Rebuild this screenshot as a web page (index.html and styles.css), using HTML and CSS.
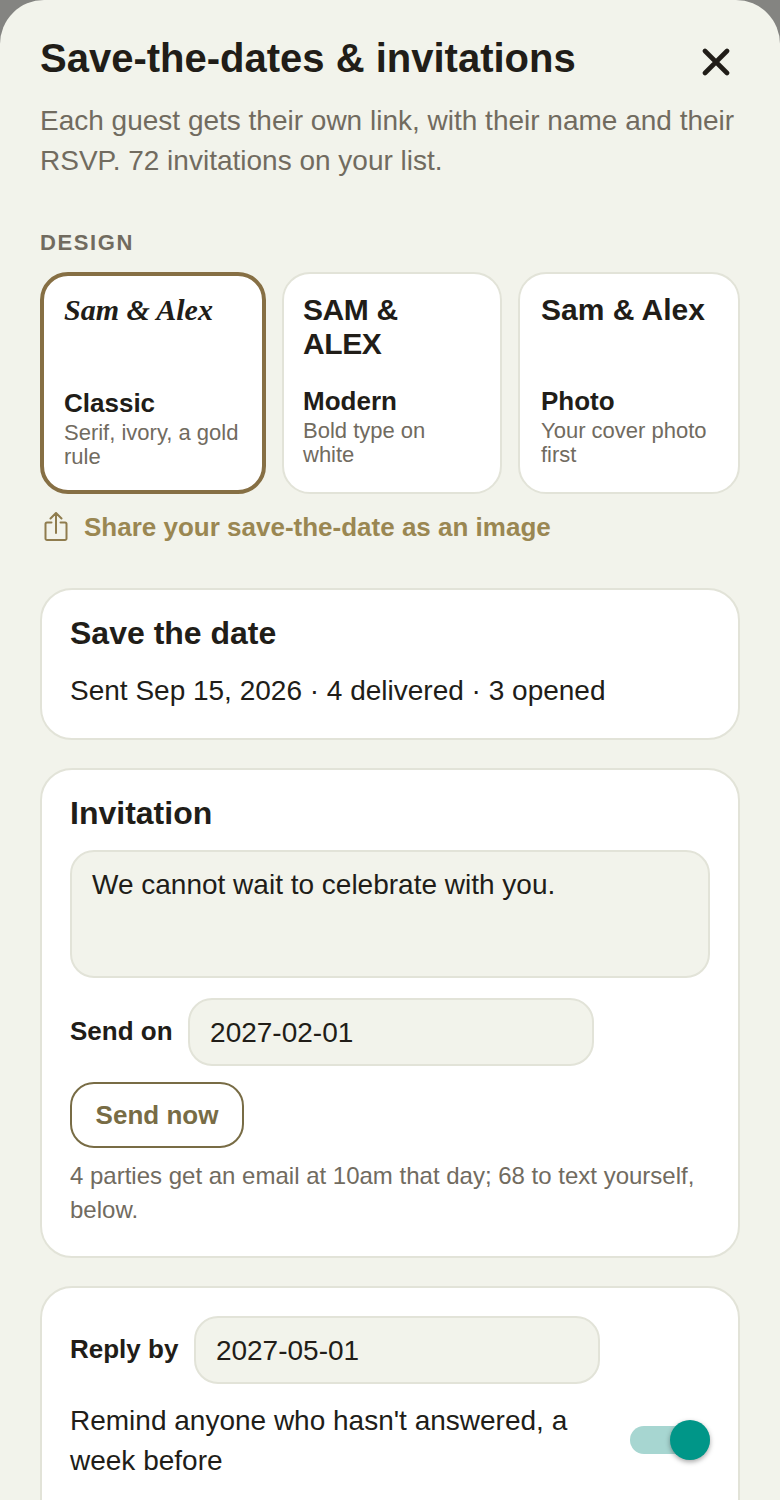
FILE: index.html
```html
<!DOCTYPE html>
<html lang="en">
<head>
<meta charset="utf-8">
<title>Save-the-dates &amp; invitations</title>
<link rel="stylesheet" href="styles.css">
</head>
<body>
<div class="sheet">
  <header class="head">
    <h1 class="title">Save-the-dates &amp; invitations</h1>
    <button class="close" aria-label="Close">
      <svg viewBox="0 0 28 28" width="28" height="28"><path d="M3 3 L25 25 M25 3 L3 25" fill="none" stroke="#211d18" stroke-width="4.6" stroke-linecap="round"/></svg>
    </button>
  </header>
  <p class="intro">Each guest gets their own link, with their name and their RSVP. 72 invitations on your list.</p>
  <div class="label">DESIGN</div>
  <div class="designs">
    <div class="design selected">
      <div class="sample serif">Sam &amp; Alex</div>
      <div class="name">Classic</div>
      <div class="desc">Serif, ivory, a gold rule</div>
    </div>
    <div class="design">
      <div class="sample caps">SAM &amp; ALEX</div>
      <div class="name">Modern</div>
      <div class="desc">Bold type on white</div>
    </div>
    <div class="design wide">
      <div class="sample">Sam &amp; Alex</div>
      <div class="name">Photo</div>
      <div class="desc">Your cover photo first</div>
    </div>
  </div>
  <div class="share">
    <svg viewBox="0 0 24 30" width="24" height="30"><path d="M7.5 10.5 H3 A1.5 1.5 0 0 0 1.5 12 V26.5 A1.5 1.5 0 0 0 3 28 H21 A1.5 1.5 0 0 0 22.5 26.5 V12 A1.5 1.5 0 0 0 21 10.5 H16.5 M12 21 V1.5 M6.5 6.5 L12 1 L17.5 6.5" fill="none" stroke="#8f7c4e" stroke-width="2" stroke-linecap="round" stroke-linejoin="round"/></svg>
    <span>Share your save-the-date as an image</span>
  </div>
  <section class="card first">
    <h2 class="card-title">Save the date</h2>
    <p class="status">Sent Sep 15, 2026 · 4 delivered · 3 opened</p>
  </section>
  <section class="card invite">
    <h2 class="card-title">Invitation</h2>
    <div class="message">We cannot wait to celebrate with you.</div>
    <div class="field">
      <span class="field-label">Send on</span>
      <div class="date">2027-02-01</div>
    </div>
    <button class="send">Send now</button>
    <p class="note">4 parties get an email at 10am that day; 68 to text yourself, below.</p>
  </section>
  <section class="card last">
    <div class="field">
      <span class="field-label">Reply by</span>
      <div class="date">2027-05-01</div>
    </div>
    <div class="remind">
      <span>Remind anyone who hasn't answered, a week before</span>
      <div class="toggle"><div class="knob"></div></div>
    </div>
  </section>
</div>
</body>
</html>
```
FILE: styles.css
```css
* { box-sizing: border-box; }
html, body { margin: 0; height: 1500px; overflow: hidden; background: #848481; }
body { font-family: "Liberation Sans", Arial, sans-serif; color: #211d18; }
.sheet { background: #f2f3eb; border-radius: 44px 44px 0 0; padding: 36px 40px 0; height: 1500px; overflow: hidden; }
.head { display: flex; justify-content: space-between; align-items: flex-start; }
.title { margin: 0; font-size: 40px; line-height: 44px; font-weight: 700; }
.close { background: none; border: 0; padding: 0; margin: 12px 8px 0 0; width: 32px; height: 28px; display: flex; justify-content: center; }
.intro { margin: 21px 0 0; font-size: 28px; line-height: 40px; color: #716b5f; }
.label { margin-top: 49px; font-size: 22px; line-height: 26px; font-weight: 700; letter-spacing: 1.6px; color: #716b5f; }
.designs { display: grid; grid-template-columns: 226px 220px 222px; gap: 16px; margin-top: 16px; }
.design { height: 222px; background: #fff; border: 2px solid #e2e3d8; border-radius: 28px; padding: 19px 19px; display: flex; flex-direction: column; }
.design.wide { padding-left: 21px; }
.design.selected { border: 4px solid #866f44; padding: 15px 20px; }
.sample { font-size: 30px; line-height: 34px; font-weight: 700; height: 72px; margin-bottom: 20px; }
.sample.caps { letter-spacing: -0.4px; }
.sample.serif { font-family: "Liberation Serif", "Times New Roman", serif; font-style: italic; line-height: 38px; margin-bottom: 24px; }
.name { font-size: 26px; line-height: 32px; font-weight: 700; }
.desc { margin-top: 2px; font-size: 22px; line-height: 24px; color: #716b5f; }
.share { display: flex; align-items: center; gap: 16px; margin: 15px 0 0 4px; height: 36px; font-size: 26px; font-weight: 700; color: #9a8752; }
.card { background: #fff; border: 2px solid #e2e3d8; border-radius: 32px; padding: 24px 28px 28px; margin-top: 28px; }
.card.first { margin-top: 43px; height: 152px; }
.card.invite { padding-bottom: 29px; }
.card.last { padding-top: 28px; height: 260px; }
.card-title { margin: 0; font-size: 32px; line-height: 38px; font-weight: 700; }
.status { margin: 19px 0 0; font-size: 28px; line-height: 40px; }
.message { margin-top: 18px; height: 128px; background: #f2f3eb; border: 2px solid #e2e3d8; border-radius: 24px; padding: 13px 20px; font-size: 28px; line-height: 40px; }
.field { display: flex; align-items: center; gap: 15.5px; margin-top: 20px; }
.card.last .field { margin-top: 0; }
.field-label { padding-bottom: 2px; font-size: 26px; font-weight: 700; }
.date { width: 406px; height: 68px; background: #f2f3eb; border: 2px solid #e2e3d8; border-radius: 24px; padding: 0 20px; font-size: 28px; line-height: 66px; }
.send { display: block; margin-top: 16px; width: 174px; height: 66px; background: #fff; border: 2px solid #786c45; border-radius: 24px; padding: 0; font: 700 26px "Liberation Sans", Arial, sans-serif; color: #786c45; }
.note { margin: 11px 0 0; font-size: 24px; line-height: 34px; color: #716b5f; }
.remind { display: flex; justify-content: space-between; align-items: center; margin-top: 17px; font-size: 28px; line-height: 40px; }
.remind span { width: 520px; }
.toggle { position: relative; flex: none; width: 80px; height: 28px; margin-top: -2px; background: #a7d6d1; border-radius: 14px; }
.knob { position: absolute; right: 0; top: -6px; width: 40px; height: 40px; border-radius: 50%; background: #009688; box-shadow: 0 2px 5px rgba(0,0,0,.35); }
```
